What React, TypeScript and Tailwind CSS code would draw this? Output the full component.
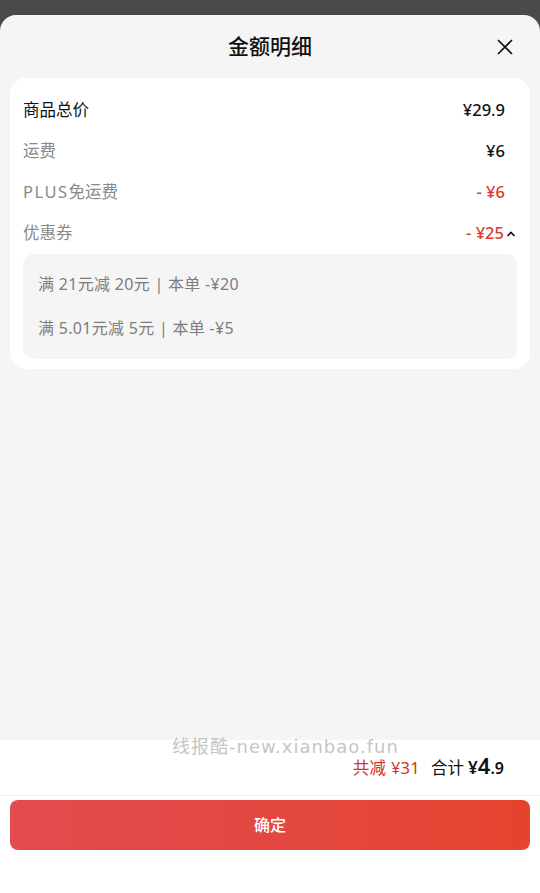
import React from "react";

const font = { fontFamily: '"Noto Sans", "Noto Sans CJK SC", sans-serif' };

function Row({ label, value, strong, red, caret }: { label: React.ReactNode; value: string; strong?: boolean; red?: boolean; caret?: boolean }) {
  return (
    <div className="flex items-center h-[41px]">
      <span className={strong ? "text-[16.5px] text-[#111]" : "text-[16.5px] text-[#8a8a8a]"}>{label}</span>
      <span className="flex-1" />
      <span className={red ? "text-[16.5px] font-medium text-[#dc3a2c]" : "text-[16.5px] font-medium text-[#111]"}>{value}</span>
      {caret ? (
        <svg width="12" height="12" viewBox="0 0 12 12" className="ml-[1px]">
          <path d="M2.5 8 L6 4.5 L9.5 8" fill="none" stroke="#111" strokeWidth="1.6" />
        </svg>
      ) : (
        <span className="w-[12px]" />
      )}
    </div>
  );
}

export default function App() {
  return (
    <div className="h-[893px] bg-[#4a4a4a] pt-[15px] flex flex-col" style={font}>
      <div className="flex-1 flex flex-col rounded-t-[16px] bg-[#f5f5f5] overflow-hidden relative">
        <div className="h-[63px] flex items-center justify-center relative">
          <h1 className="text-[21px] font-medium text-[#111]">金额明细</h1>
          <svg width="18" height="18" viewBox="0 0 18 18" className="absolute right-[26px] top-[23px]">
            <path d="M2 2 L16 16 M16 2 L2 16" stroke="#111" strokeWidth="1.7" />
          </svg>
        </div>

        <div className="mx-[10px] bg-white rounded-[16px] px-[13px] pt-[12px] pb-[10px]">
          <Row label="商品总价" value="¥29.9" strong />
          <Row label="运费" value="¥6" />
          <Row label={<><span className="tracking-[1.5px]">PLUS</span>免运费</>} value="- ¥6" red />
          <Row label="优惠券" value="- ¥25" red caret />
          <div className="bg-[#f5f5f5] rounded-[10px] px-[15px] pt-[8px] pb-[9px] text-[16px] text-[#7d7d7d]">
            <div className="h-[44px] flex items-center tracking-[0.3px]">满 21元减 20元 | 本单 -¥20</div>
            <div className="h-[44px] flex items-center tracking-[0.3px]">满 5.01元减 5元 | 本单 -¥5</div>
          </div>
        </div>

        <div className="flex-1" />

        <div className="bg-white relative">
          <div
            className="absolute left-[172px] top-[-7px] text-[18px] text-[#c6c6c6] tracking-[1px]"
            style={{ fontFamily: '"DejaVu Sans", "Noto Sans CJK SC", sans-serif' }}
          >
            线报酷-new.xianbao.fun
          </div>
          <div className="h-[56px] flex items-center justify-end pr-[36px] pb-[5px] border-b border-[#f2f2f2]">
            <div className="flex items-baseline">
              <span className="text-[16.5px] text-[#d2352b] tracking-[0.3px]">共减 ¥31</span>
              <span className="ml-[11px] text-[16.5px] text-[#111]">合计</span>
              <span className="ml-[4px] font-semibold text-[17px] text-[#111]">¥</span>
              <span className="font-semibold text-[22px] text-[#111]">4</span>
              <span className="font-semibold text-[16px] text-[#111]">.9</span>
            </div>
          </div>
          <div className="px-[10px] pt-[4px] pb-[43px]">
            <button className="w-full h-[50px] rounded-[8px] bg-gradient-to-r from-[#e24b50] to-[#e5432d] text-white text-[16px] font-medium">
              确定
            </button>
          </div>
        </div>
      </div>
    </div>
  );
}
